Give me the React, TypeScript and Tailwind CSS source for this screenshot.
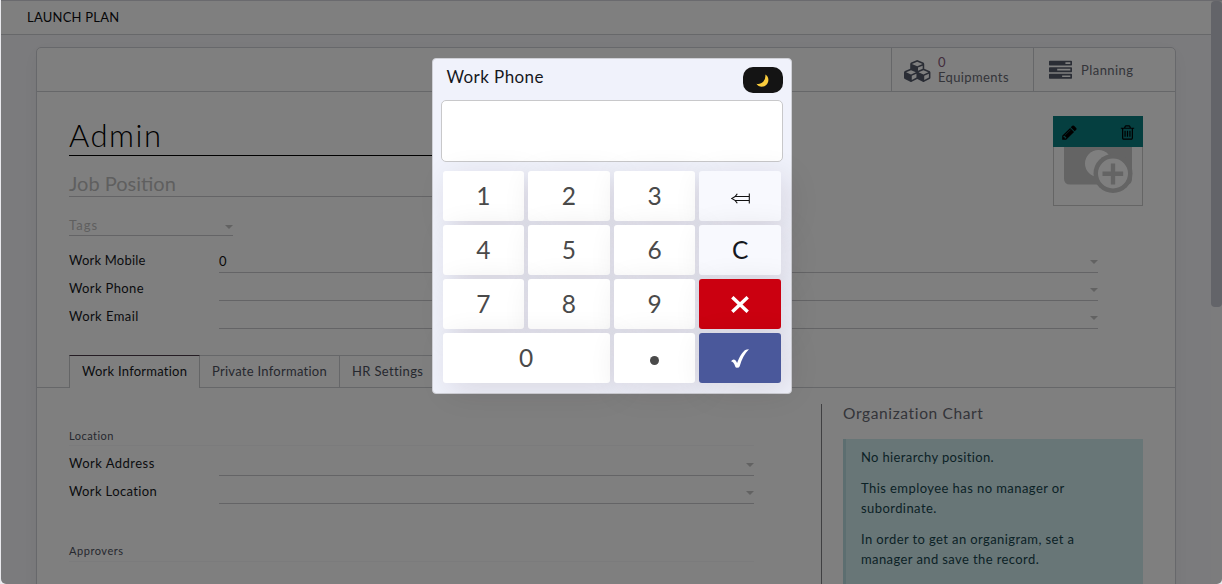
import React from "react";

const caret = (
  <svg className="h-1 w-2 shrink-0 fill-[#c4c4c4]" viewBox="0 0 8 4">
    <path d="M0 0h8L4 4z" />
  </svg>
);

function Field({ label, value, arrow = true, tracking }: { label: string; value?: string; arrow?: boolean; tracking: string }) {
  return (
    <div className="flex h-7">
      <div className={`w-[150px] shrink-0 pt-[7px] text-[13px] leading-4 text-[#16181d] ${tracking}`}>{label}</div>
      <div className="flex flex-1 justify-between border-b border-[#c8c8cc]">
        <span className="pt-[8px] text-[13px] leading-4 text-[#111]">{value}</span>
        {arrow && <span className="flex items-end pb-2">{caret}</span>}
      </div>
    </div>
  );
}

function CubesIcon() {
  return (
    <svg className="h-[22px] w-[28px]" viewBox="0 0 2304 1792" fill="currentColor">
      <path d="M640 1632l384-192v-314l-384 164v342zm-64-454l404-173-404-173-404 173zm1088 454l384-192v-314l-384 164v342zm-64-454l404-173-404-173-404 173zm-448-293l384-165v-266l-384 164v267zm-64-379l441-189-441-189-441 189zm1088 518v416q0 36-19 67t-52 47l-448 224q-25 14-57 14t-57-14l-448-224q-4-2-7-4-2 2-7 4l-448 224q-25 14-57 14t-57-14l-448-224q-33-16-52-47t-19-67v-416q0-38 21.5-70t56.5-48l434-186v-400q0-38 21.5-70t56.5-48l448-192q23-10 50-10t50 10l448 192q35 16 56.5 48t21.5 70v400l434 186q36 16 57 48t21 70z" />
    </svg>
  );
}

function TasksIcon() {
  return (
    <svg className="h-[23px] w-[23px]" viewBox="0 0 1792 1792" fill="currentColor">
      <path d="M1024 1408h640v-128h-640v128zm-384-512h1024v-128h-1024v128zm640-512h384v-128h-384v128zm512 832v256q0 26-19 45t-45 19h-1664q-26 0-45-19t-19-45v-256q0-26 19-45t45-19h1664q26 0 45 19t19 45zm0-512v256q0 26-19 45t-45 19h-1664q-26 0-45-19t-19-45v-256q0-26 19-45t45-19h1664q26 0 45 19t19 45zm0-512v256q0 26-19 45t-45 19h-1664q-26 0-45-19t-19-45v-256q0-26 19-45t45-19h1664q26 0 45 19t19 45z" />
    </svg>
  );
}

function PencilIcon() {
  return (
    <svg className="h-[17px] w-[17px]" viewBox="0 0 1792 1792">
      <path d="M491 1536l91-91-235-235-91 91v107h128v128h107zm523-928q0-22-22-22-10 0-17 7l-542 542q-7 7-7 17 0 22 22 22 10 0 17-7l542-542q7-7 7-17zm-54-192l416 416-832 832h-416v-416zm683 96q0 53-37 90l-166 166-416-416 166-165q36-38 90-38 53 0 91 38l235 234q37 39 37 91z" />
    </svg>
  );
}

function TrashIcon() {
  return (
    <svg className="h-[17px] w-[17px]" viewBox="0 0 1792 1792">
      <path d="M704 736v576q0 14-9 23t-23 9h-64q-14 0-23-9t-9-23v-576q0-14 9-23t23-9h64q14 0 23 9t9 23zm256 0v576q0 14-9 23t-23 9h-64q-14 0-23-9t-9-23v-576q0-14 9-23t23-9h64q14 0 23 9t9 23zm256 0v576q0 14-9 23t-23 9h-64q-14 0-23-9t-9-23v-576q0-14 9-23t23-9h64q14 0 23 9t9 23zm128 724v-948h-896v948q0 22 7 40.5t14.5 27 10.5 8.5h832q3 0 10.5-8.5t14.5-27 7-40.5zm-672-1076h448l-48-117q-7-9-17-11h-317q-10 2-17 11zm928 32v64q0 14-9 23t-23 9h-96v948q0 83-47 143.5t-113 60.5h-832q-66 0-113-58.5t-47-141.5v-952h-96q-14 0-23-9t-9-23v-64q0-14 9-23t23-9h309l70-167q15-37 54-63t79-26h320q40 0 79 26t54 63l70 167h309q14 0 23 9t9 23z" />
    </svg>
  );
}

function Avatar() {
  return (
    <div className="flex h-[90px] w-[90px] flex-col border border-t-0 border-[#cacaca]">
      <div className="-mx-px flex h-[31px] shrink-0 items-center justify-between bg-[#0b7e80] pl-2 pr-[7px] pt-px">
        <PencilIcon />
        <TrashIcon />
      </div>
      <svg className="h-[58px] w-[88px]" viewBox="0 0 88 58">
        <path d="M10 0h68v32q0 5.500-5.500 5.500H16q-6 0-6-6z" fill="#c8c8c8" />
        <circle cx="44.500" cy="16.500" r="13.500" fill="#fff" />
        <circle cx="59" cy="26.500" r="19.500" fill="#c8c8c8" />
        <circle cx="59" cy="26.500" r="15" fill="#fff" />
        <path d="M56.800 16.500h4.400v8h8v4.400h-8v8.500h-4.400v-8.500h-8.300v-4.400h8.300z" fill="#c8c8c8" />
      </svg>
    </div>
  );
}

function Backdrop() {
  return (
    <div className="ml-px flex h-[584px] flex-1 overflow-hidden">
      <div className="flex min-w-0 flex-1 flex-col border-t border-[#d4d5dc]">
        <div className="flex h-[34px] shrink-0 items-center border-b border-[#cfd0d4] bg-white pl-[26px] text-[13px] tracking-[0.22px] text-[#0c0d10]">
          LAUNCH PLAN
        </div>
        <div className="flex-1 overflow-hidden bg-[#f7f7fb] pt-3 pl-[35px] pr-[35px]">
          <div className="h-[600px] w-[1140px] rounded-t-[5px] border border-[#cfd0d6] bg-white shadow-[0_5px_20px_rgba(0,0,0,0.05)]">
            <div className="flex h-11 justify-end border-b border-[#cdced2] text-[13px] text-[#686a74]">
              <div className="flex w-[142px] items-center gap-[6px] border-l border-[#cdced2] pl-3">
                <span className="pt-[2px] text-[#555b6b]"><CubesIcon /></span>
                <div className="leading-[15px]">
                  <div className="text-[#875a7b]">0</div>
                  <div className="tracking-[0.37px]">Equipments</div>
                </div>
              </div>
              <div className="flex w-[142px] items-center gap-[9px] border-l border-[#cdced2] pl-[15px] pt-[2px]">
                <span className="text-[#555b6b]"><TasksIcon /></span>
                <span className="tracking-[0.45px]">Planning</span>
              </div>
            </div>
            <div className="flex h-[263px] flex-col px-8 pt-6">
              <div className="flex justify-between">
                <div className="w-[600px]">
                  <div className="flex h-10 items-center border-b border-black text-[31px] font-light leading-10 tracking-[1.5px] text-black">
                    <span className="-mt-[2px]">Admin</span>
                  </div>
                  <div className="h-[41px] border-b border-[#c8c8cc] pt-[15px] text-[20px] leading-6 tracking-[0px] text-[#bfbfbf]">
                    Job Position
                  </div>
                </div>
                <Avatar />
              </div>
              <div className="-mt-[9px] flex h-[39px] w-[164px] justify-between border-b border-[#c8c8cc] pt-5 text-[13px] leading-4 tracking-[1px] text-[#bfbfbf]">
                Tags
                <span className="pt-[8px]">{caret}</span>
              </div>
              <div className="w-[1029px] pt-[9px]">
                <Field label="Work Mobile" value="0" tracking="tracking-[0.2px]" />
                <Field label="Work Phone" tracking="tracking-[0.37px]" />
                <Field label="Work Email" tracking="tracking-[0.43px]" />
              </div>
            </div>
            <div className="flex h-[33px] text-[13px] text-[#4d515e]">
              <div className="w-8 border-b border-[#cdced2]" />
              <div className="w-[131px] border-x border-t border-[#c9cacd] border-t-[#4a3a48] pl-3 pt-[7px] leading-4 tracking-[0.24px] text-[#16181d]">
                Work Information
              </div>
              <div className="w-[140px] border-b border-r border-t border-[#cdced2] pl-3 pt-[7px] leading-4 tracking-[0.27px]">Private Information</div>
              <div className="w-[96px] border-b border-r border-t border-[#cdced2] pl-3 pt-[7px] leading-4 tracking-[0.36px]">HR Settings</div>
              <div className="flex-1 border-b border-[#cdced2]" />
            </div>
            <div className="flex h-[220px] px-8 pt-4">
              <div className="w-[753px] border-r border-[#808084]">
                <div className="w-[685px] pt-[25px]">
                  <div className="h-[17px] border-b border-[#f6f6f8] text-[11px] leading-[14px] tracking-[0.48px] text-[#4d515e]">Location</div>
                  <div className="pt-[2px]">
                    <Field label="Work Address" tracking="tracking-[0.47px]" />
                    <Field label="Work Location" tracking="tracking-[0.37px]" />
                  </div>
                  <div className="mt-10 h-[18px] border-b border-[#f6f6f8] text-[11px] leading-[13px] tracking-[0.55px] text-[#4d515e]">Approvers</div>
                </div>
              </div>
              <div className="w-[321px] pl-[21px]">
                <div className="-mt-px h-9 text-[15.500px] leading-5 tracking-[0.64px] text-[#686a74]">Organization Chart</div>
                <div className="h-[180px] border-l-[3px] border-[#b8dde1] bg-[#d1ecef] pl-[15px] pt-2 text-[13px] leading-5 tracking-[0.36px] text-[#17454d]">
                  <p className="mb-[11px]">No hierarchy position.</p>
                  <p className="mb-[11px] tracking-[0.43px]">This employee has no manager or<br />subordinate.</p>
                  <p className="tracking-[0.4px]">In order to get an organigram, set a<br />manager and save the record.</p>
                </div>
              </div>
            </div>
          </div>
        </div>
      </div>
      <div className="w-[11px] border-t border-[#d4d5dc] bg-[#f9f9fa]">
        <div className="h-[306px] rounded-[4px] bg-[#c6c8d3]" />
      </div>
    </div>
  );
}

const KEY = "flex items-center justify-center rounded-[3px] text-[24.500px] shadow-[7px_7px_32px_rgba(40,20,30,0.12)]";

function Keypad() {
  return (
    <div className="h-[336px] w-[360px] overflow-visible rounded-[4px] border border-[#cfd0d6] bg-[#f0f2fb] px-2 pt-2">
      <div className="flex h-[33px] items-start justify-between pl-[6px]">
        <h1 className="-mt-px text-[17px] leading-[22px] tracking-[0.42px] text-[#16181d]">Work Phone</h1>
        <div className="flex h-[26px] w-10 items-center justify-center rounded-[10px] bg-[#141414]">
          <svg className="h-[13px] w-[13px]" viewBox="0 0 13 13">
            <path d="M9.300.4Q12.400 2.200 12.400 5.800C12.400 10 9.400 12.700 5.900 12.700Q2.200 12.700.4 9.700C3 10.300 5.600 9.600 7.400 7.500Q9.900 4.600 9.300.4z" fill="#fbcd3d" />
          </svg>
        </div>
      </div>
      <div className="h-[62px] rounded-[5px] border border-[#c8c8ca] bg-white" />
      <div className="ml-[2px] mt-[9px] grid w-[338.500px] grid-cols-4 grid-rows-[repeat(4,50px)] gap-1 text-[#4a4a4a]">
        <div className={`${KEY} bg-white`}>1</div>
        <div className={`${KEY} bg-white`}>2</div>
        <div className={`${KEY} bg-white`}>3</div>
        <div className={`${KEY} bg-[#f8f9fe]`}>
          <svg className="mt-[4px] h-[11px] w-[19px]" viewBox="0 0 19 11" fill="none" stroke="#111" strokeWidth="1.100">
            <path d="M18.300.5v10M18 3.500H4M18 7.500H4M6.300.7Q4.500 4.200.8 5.500Q4.500 6.800 6.300 10.300" />
          </svg>
        </div>
        <div className={`${KEY} bg-white`}>4</div>
        <div className={`${KEY} bg-white`}>5</div>
        <div className={`${KEY} bg-white`}>6</div>
        <div className={`${KEY} bg-[#f8f9fe] text-[#16181d]`}>C</div>
        <div className={`${KEY} bg-white`}>7</div>
        <div className={`${KEY} bg-white`}>8</div>
        <div className={`${KEY} bg-white`}>9</div>
        <div className={`${KEY} bg-[#cb0010]`}>
          <svg className="mt-px h-[17px] w-[18px]" viewBox="0 0 18 17" stroke="#fff" strokeWidth="3.400">
            <path d="M1.300 1.200 16.700 15.800M16.700 1.200 1.300 15.800" />
          </svg>
        </div>
        <div className={`${KEY} col-span-2 bg-white`}>0</div>
        <div className={`${KEY} bg-white`}>
          <span className="mt-[5px] h-[9px] w-[9px] rounded-full bg-[#4a4a4a]" />
        </div>
        <div className={`${KEY} bg-[#4a589b]`}>
          <svg className="mt-px h-[19px] w-[18px]" viewBox="0 0 18 19" fill="#fff">
            <path d="M0 12.200Q1.800 10 3.600 10.700Q5 11.300 6.100 14C8.500 7.500 11.500 2.700 14.300.9Q15.500.2 18 .2C13.500 4.500 10.700 10.500 8.700 17.200Q8.300 18.800 5.900 18.800Q4.600 18.800 4.200 17.400Q2.700 12.700 0 12.200z" />
          </svg>
        </div>
      </div>
    </div>
  );
}

export default function App() {
  return (
    <div className="relative flex h-[584px] w-[1222px] overflow-hidden bg-[#e9e9ed] font-['Lato','Open_Sans',sans-serif]">
      <div className="flex flex-1 overflow-hidden rounded-b-[5px]">
        <Backdrop />
      </div>
      <div className="absolute inset-y-0 left-px right-0 flex items-start justify-center overflow-hidden rounded-b-[5px] bg-black/50 pt-[58px]">
        <Keypad />
      </div>
    </div>
  );
}
